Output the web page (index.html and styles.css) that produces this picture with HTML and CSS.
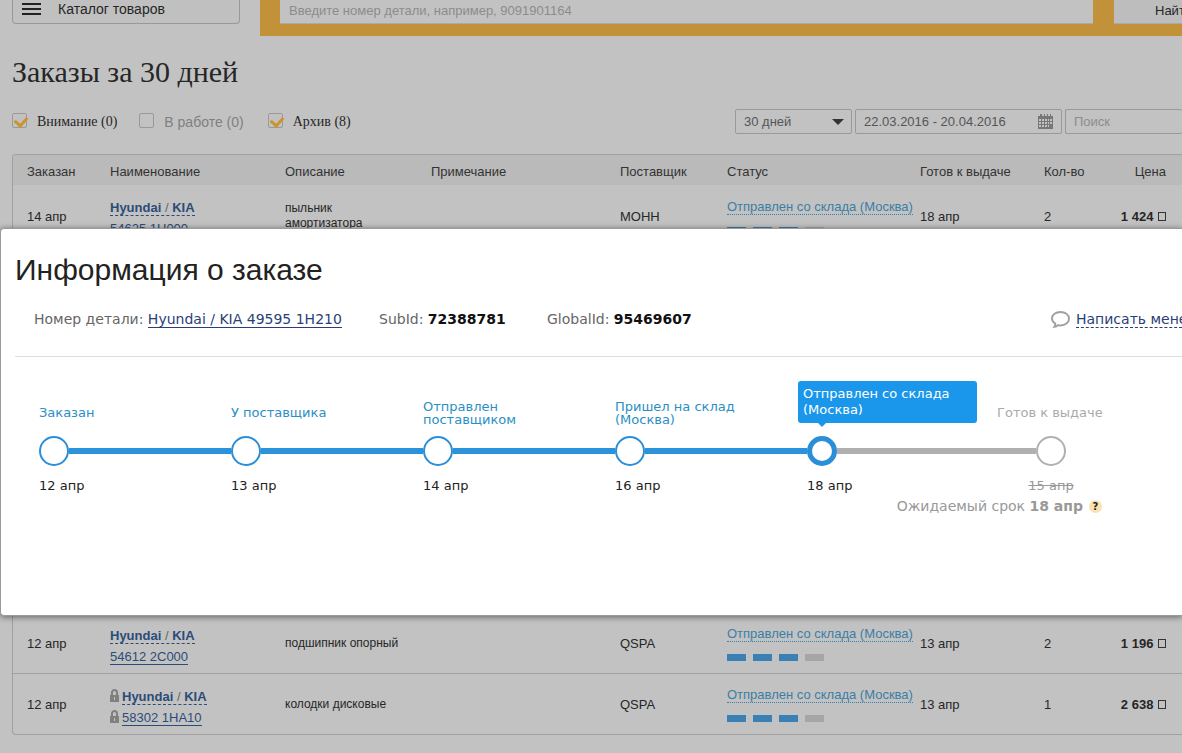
FILE: index.html
```html
<!DOCTYPE html>
<html lang="ru">
<head>
<meta charset="utf-8">
<title>Заказы за 30 дней</title>
<link rel="stylesheet" href="styles.css">
</head>
<body>
<header class="topbar">
  <button class="catalog" type="button">
    <svg class="burger" viewBox="0 0 19 12" aria-hidden="true"><path d="M0 1h19M0 6h19M0 11h19"/></svg>
    Каталог товаров
  </button>
  <form class="search">
    <input class="search-input" type="text" placeholder="Введите номер детали, например, 9091901164" aria-label="Номер детали">
    <button class="search-button" type="button">Найт</button>
  </form>
</header>

<main class="page">
  <h1 class="title">Заказы за 30 дней</h1>
  <div class="toolbar">
    <div class="filters">
      <label class="filter"><input class="check" type="checkbox" checked>Внимание (0)</label>
      <label class="filter filter-muted"><input class="check" type="checkbox">В работе (0)</label>
      <label class="filter"><input class="check" type="checkbox" checked>Архив (8)</label>
    </div>
    <div class="controls">
      <div class="select-wrap">
        <select class="field period" aria-label="Период"><option>30 дней</option></select>
        <svg class="arrow" viewBox="0 0 12 6" aria-hidden="true"><path d="M0 0h12L6 6z"/></svg>
      </div>
      <div class="field dates">
        <input class="dates-input" type="text" value="22.03.2016 - 20.04.2016" aria-label="Даты">
        <svg class="calendar" viewBox="0 0 15 15" aria-hidden="true">
          <path d="M0 2h2V0h2v2h2V0h1v2h2V0h1v2h2V0h1v2h2v13H0zM1 5v2h2V5zM4 5v2h2V5zM7 5v2h2V5zM10 5v2h1V5zM12 5v2h2V5zM1 8v2h2V8zM4 8v2h2V8zM7 8v2h2V8zM10 8v2h1V8zM12 8v2h2V8zM1 11v2h2v-2zM4 11v2h2v-2zM7 11v2h2v-2zM10 11v2h1v-2z"/>
        </svg>
      </div>
      <input class="field find" type="text" placeholder="Поиск" aria-label="Поиск">
    </div>
  </div>

  <div class="orders-frame">
  <table class="orders">
    <colgroup><col class="c-date"><col class="c-name"><col class="c-desc"><col class="c-note"><col class="c-supplier"><col class="c-status"><col class="c-ready"><col></colgroup>
    <thead>
      <tr><th>Заказан</th><th>Наименование</th><th>Описание</th><th>Примечание</th><th>Поставщик</th><th>Статус</th><th>Готов к выдаче</th>
      <th><div class="qty-price"><span>Кол-во</span><span>Цена</span></div></th></tr>
    </thead>
    <tbody>
      <tr>
        <td>14 апр</td>
        <td><div class="name"><a class="brand" href="#">Hyundai <span class="slash">/</span> KIA</a><a class="code" href="#">54625 1H000</a></div></td>
        <td class="desc">пыльник<br>амортизатора</td><td></td><td>МОНН</td>
        <td><a class="status" href="#">Отправлен со склада (Москва)</a><div class="bars"><i class="bar on"></i><i class="bar on"></i><i class="bar on"></i><i class="bar"></i></div></td>
        <td>18 апр</td>
        <td><div class="qty-price"><span>2</span><span class="price">1 424 <i class="currency"></i></span></div></td>
      </tr>
      <tr><td colspan="8"></td></tr>
      <tr><td colspan="8"></td></tr>
      <tr><td colspan="8"></td></tr>
      <tr><td colspan="8"></td></tr>
      <tr><td colspan="8"></td></tr>
      <tr><td colspan="8"></td></tr>
      <tr>
        <td>12 апр</td>
        <td><div class="name"><a class="brand" href="#">Hyundai <span class="slash">/</span> KIA</a><a class="code" href="#">54612 2C000</a></div></td>
        <td class="desc">подшипник опорный</td><td></td><td>QSPA</td>
        <td><a class="status" href="#">Отправлен со склада (Москва)</a><div class="bars"><i class="bar on"></i><i class="bar on"></i><i class="bar on"></i><i class="bar"></i></div></td>
        <td>13 апр</td>
        <td><div class="qty-price"><span>2</span><span class="price">1 196 <i class="currency"></i></span></div></td>
      </tr>
      <tr>
        <td>12 апр</td>
        <td><div class="name">
          <div class="locked"><svg class="lock" viewBox="0 0 9 13" aria-hidden="true"><path class="lock-arc" d="M2 6V3.500a2.500 2.500 0 0 1 5 0V6"/><path class="lock-body" d="M0 6h9v7H0zM4 8v3h1V8z"/></svg><a class="brand" href="#">Hyundai <span class="slash">/</span> KIA</a></div>
          <div class="locked"><svg class="lock" viewBox="0 0 9 13" aria-hidden="true"><path class="lock-arc" d="M2 6V3.500a2.500 2.500 0 0 1 5 0V6"/><path class="lock-body" d="M0 6h9v7H0zM4 8v3h1V8z"/></svg><a class="code" href="#">58302 1HA10</a></div>
        </div></td>
        <td class="desc">колодки дисковые</td><td></td><td>QSPA</td>
        <td><a class="status" href="#">Отправлен со склада (Москва)</a><div class="bars"><i class="bar on"></i><i class="bar on"></i><i class="bar on"></i><i class="bar"></i></div></td>
        <td>13 апр</td>
        <td><div class="qty-price"><span>1</span><span class="price">2 638 <i class="currency"></i></span></div></td>
      </tr>
    </tbody>
  </table>
  </div>
</main>

<section class="modal" role="dialog" aria-labelledby="modal-title">
  <h2 class="modal-title" id="modal-title">Информация о заказе</h2>
  <div class="info">
    <div class="info-item info-part">Номер детали: <a class="part" href="#">Hyundai / KIA 49595 1H210</a></div>
    <div class="info-item info-sub">SubId: <b class="id">72388781</b></div>
    <div class="info-item">GlobalId: <b class="id">95469607</b></div>
    <div class="contact">
      <svg class="bubble" viewBox="0 0 20 18" aria-hidden="true"><path d="M4.500 13.200C2.200 11.900 1 10.300 1 8.200 1 4 5 1 10 1s9 3 9 7.200-4 7.100-9 7.100c-.9 0-1.800-.1-2.600-.3C6.300 16.200 5 16.700 3.500 16.800c.7-1 1.100-2.200 1-3.600z"/></svg>
      <a class="write" href="#">Написать мене</a>
    </div>
  </div>
  <ol class="steps">
    <li class="step"><div class="label">Заказан</div><div class="track"><i class="node"></i><i class="line"></i></div><div class="when">12 апр</div></li>
    <li class="step"><div class="label">У поставщика</div><div class="track"><i class="node"></i><i class="line"></i></div><div class="when">13 апр</div></li>
    <li class="step"><div class="label">Отправлен<br>поставщиком</div><div class="track"><i class="node"></i><i class="line"></i></div><div class="when">14 апр</div></li>
    <li class="step"><div class="label">Пришел на склад<br>(Москва)</div><div class="track"><i class="node"></i><i class="line"></i></div><div class="when">16 апр</div></li>
    <li class="step step-current"><div class="tip">Отправлен со склада (Москва)</div><div class="label"></div><div class="track"><i class="node"></i><i class="line line-off"></i></div><div class="when">18 апр</div></li>
    <li class="step step-last"><div class="label">Готов к выдаче</div><div class="track"><i class="line line-off"></i><i class="node"></i><i class="gap"></i></div><div class="when"><s>15 апр</s></div>
      <div class="expected"><span>Ожидаемый срок <b>18 апр</b></span><button class="help" type="button">?</button></div></li>
  </ol>
</section>
</body>
</html>
```
FILE: styles.css
```css
* { box-sizing: border-box; }
body {
  margin: 0;
  min-height: 100vh;
  position: relative;
  overflow: hidden;
  background: #c2c2c2;
  color: #262626;
  font: 13px/15px "Liberation Sans", Arial, sans-serif;
}
input, select, button { font: inherit; color: inherit; margin: 0; border-radius: 0; }

.topbar { display: flex; align-items: flex-start; gap: 20px; height: 36px; padding-left: 12px; }
.catalog {
  display: flex; align-items: center; gap: 17px;
  width: 228px; height: 24px; padding: 0 9px 5px;
  border: 1px solid #999; border-top: 0; border-radius: 0 0 4px 4px;
  background: #c0c0c0; font-size: 14px;
}
.burger { width: 19px; height: 12px; fill: none; stroke: #222; stroke-width: 2; }
.search { flex: 1; display: flex; gap: 21px; height: 36px; padding: 0 0 12px 20px; background: #c2923a; }
.search-input { flex: 1; border: 0; border-bottom: 1px solid #aaa; padding: 0 9px 3px; background: #c2c2c2; }
.search-input::placeholder, .find::placeholder { color: #8c8c8c; opacity: 1; }
.search-button { width: 68px; border: 0; border-bottom: 1px solid #aaa; padding: 0 0 2px 41px; text-align: left; white-space: nowrap; background: #bdbdbd; }

.page { padding-left: 12px; }
.title { margin: 18px 0 0; font: 30px/36px "Liberation Serif", "Times New Roman", serif; }
.toolbar { display: flex; align-items: flex-start; justify-content: space-between; margin-top: 19px; height: 45px; }
.filters { display: flex; gap: 22px; padding-top: 4px; }
.filter { display: flex; gap: 10px; font: 14px/18px "Liberation Serif", "Times New Roman", serif; }
.filter-muted { padding-right: 2px; font-family: "Liberation Sans", Arial, sans-serif; color: #808080; }
.check { appearance: none; width: 15px; height: 15px; border: 1px solid #999; border-radius: 2px; }
.check:checked::before {
  content: ""; display: block; width: 9px; height: 6px; margin: 2px;
  border: solid #c9962f; border-width: 0 0 3px 3px; transform: rotate(-48deg);
}
.controls { display: flex; gap: 3px; }
.field { height: 25px; border: 1px solid #999; border-radius: 2px; background: transparent; color: #555; }
.select-wrap { position: relative; width: 117px; }
.period { appearance: none; width: 100%; padding: 0 8px; }
.arrow { position: absolute; right: 8px; top: 10px; width: 12px; height: 6px; fill: #333; pointer-events: none; }
.dates { display: flex; align-items: center; width: 207px; padding: 0 8px; }
.dates-input { flex: 1; min-width: 0; border: 0; padding: 0; background: transparent; }
.calendar { width: 15px; height: 15px; fill: #777; fill-rule: evenodd; }
.find { width: 117px; padding: 0 8px; border-right: 0; }

.orders-frame { border: 1px solid #a0a0a0; border-right: 0; border-radius: 4px 0 0 4px; overflow: hidden; }
.orders { width: 100%; table-layout: fixed; border-collapse: collapse; }
.c-date { width: 97px; }
.c-name { width: 175px; }
.c-desc { width: 146px; }
.c-note { width: 189px; }
.c-supplier { width: 107px; }
.c-status { width: 193px; }
.c-ready { width: 124px; }
.orders th { height: 30px; padding: 3px 0 0; text-align: left; font-weight: normal; background: #bababa; color: #333; }
.orders td { height: 61px; padding: 2px 0 0; vertical-align: middle; white-space: nowrap; }
.orders th:first-child, .orders td:first-child { padding-left: 14px; }
.orders tbody tr + tr { border-top: 1px solid #a0a0a0; }
.orders .desc { font-size: 12px; }
.name { display: flex; flex-direction: column; align-items: flex-start; gap: 5px; padding-top: 5px; }
.locked { display: flex; align-items: flex-start; gap: 3px; }
.lock { width: 9px; height: 13px; }
.lock-arc { fill: none; stroke: #808080; stroke-width: 2; }
.lock-body { fill: #808080; fill-rule: evenodd; }
.brand, .code { color: #2b4c78; text-decoration: none; line-height: 15px; }
.brand { font-weight: bold; border-bottom: 1px dashed #2b4c78; }
.slash { font-weight: normal; color: #666; }
.code { border-bottom: 1px solid #2b4c78; }
.status { display: inline-block; color: #3a7fa6; text-decoration: none; border-bottom: 1px dotted #3a7fa6; }
.bars { display: flex; gap: 7px; margin-top: 12px; }
.bar { width: 19px; height: 7px; background: #a6a6a6; }
.bar.on { background: #3a80b5; }
.qty-price { display: flex; justify-content: space-between; padding-right: 16px; }
.price { font-weight: bold; }
.currency { display: inline-block; width: 8px; height: 9px; border: 1px solid #333; margin-left: 1px; }

.modal {
  position: absolute; top: 228px; left: 0; right: 0;
  padding: 24px 0 101px 14px;
  border: 1px solid #999; border-right: 0; border-radius: 4px 0 0 4px;
  background: #fff; color: #222;
  box-shadow: 0 1px 6px rgba(0, 0, 0, .5);
  font: 13px/16px "DejaVu Sans", Verdana, sans-serif;
}
.modal-title { margin: 0; font: 30px/34px "Liberation Sans", Arial, sans-serif; }
.info { display: flex; align-items: flex-start; padding: 24px 0 28px 19px; border-bottom: 1px solid #ddd; white-space: nowrap; color: #666; font-size: 14px; }
.info-part { width: 345px; }
.info-sub { width: 168px; }
.id { color: #111; }
.part, .write { color: #2a3f78; text-decoration: none; border-bottom: 1px solid #2a3f78; }
.contact { display: flex; align-items: flex-start; gap: 6px; width: 131px; margin-left: auto; color: #2a3f78; }
.bubble { flex: none; width: 19px; height: 17px; fill: none; stroke: #a0a0a0; stroke-width: 2; }
.write { border-bottom-style: dashed; }

.steps { display: flex; list-style: none; margin: 0; padding: 35px 0 0 24px; }
.step { position: relative; width: 192px; }
.label { display: flex; align-items: center; height: 44px; padding-bottom: 3px; line-height: 13px; color: #2a8fc4; }
.track { display: flex; align-items: center; height: 30px; }
.node { flex: none; width: 30px; height: 30px; border: 2px solid #2a8fd8; border-radius: 50%; }
.line { flex: 1; height: 6px; background: #2a93dc; }
.line-off { background: #b0b0b0; }
.when { margin-top: 12px; }
.step-current { width: 190px; }
.step-current .node { border-width: 5px; }
.step-last { display: flex; flex-direction: column; width: 108px; color: #999; }
.step-last .label { color: #aaa; white-space: nowrap; }
.step-last .node { border-color: #b0b0b0; }
.step-last .when { text-align: center; }
.gap { flex: 1; }
.expected { display: flex; align-items: center; gap: 6px; align-self: flex-end; margin-top: 4px; padding-right: 3px; white-space: nowrap; font-size: 14px; }
.help { width: 13px; height: 13px; padding: 0; border: 0; border-radius: 50%; background: #fbe3b0; color: #222; font-size: 10px; font-weight: bold; line-height: 13px; }
.tip {
  position: absolute; left: -9px; top: -11px; width: 179px;
  padding: 5px; border-radius: 3px; background: #1a97ea; color: #fff;
}
.tip::after { content: ""; position: absolute; left: 20px; top: 100%; border: 4px solid transparent; border-top-color: #1a97ea; border-bottom: 0; }
```
